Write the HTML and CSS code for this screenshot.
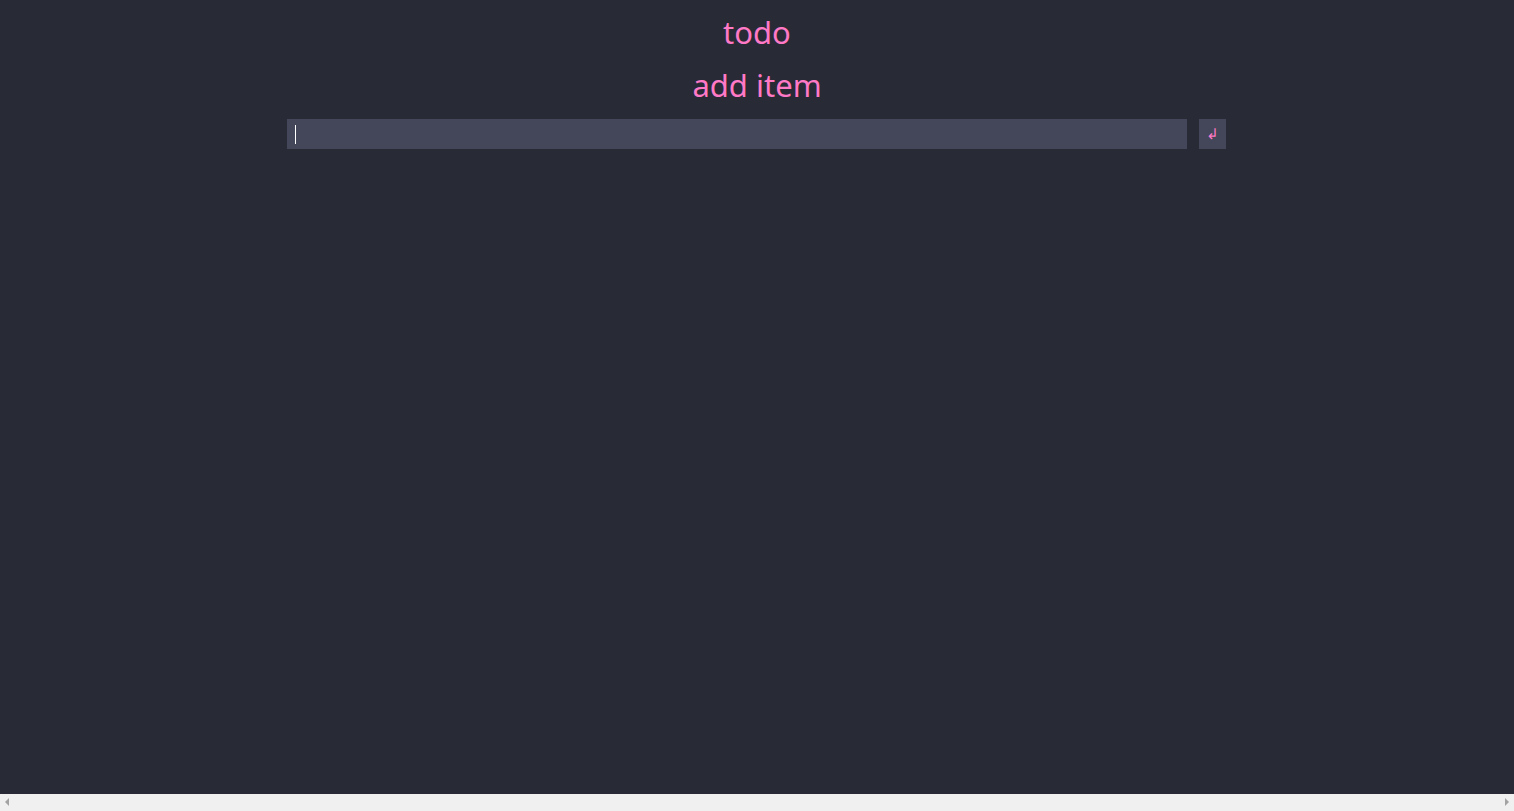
FILE: index.html
```html
<!DOCTYPE html>
<html lang="en">
<head>
<meta charset="utf-8">
<title>todo</title>
<link rel="stylesheet" href="styles.css">
</head>
<body>
<main class="app">
  <h1 class="title">todo</h1>
  <h2 class="subtitle">add item</h2>
  <form class="add-form">
    <div class="input-wrap">
      <input class="add-input" type="text" autofocus>
      <span class="caret"></span>
    </div>
    <button class="add-btn" type="button">↲</button>
  </form>
</main>
<div class="hscroll">
  <span class="arrow arrow-left"></span>
  <span class="arrow arrow-right"></span>
</div>
</body>
</html>
```

FILE: styles.css
```css
html, body {
  margin: 0;
  padding: 0;
  background: #282a36;
  height: 100%;
  overflow: hidden;
}
body {
  font-family: "Noto Sans", "Open Sans", sans-serif;
  color: #ff79c6;
}
.app {
  display: flex;
  flex-direction: column;
  align-items: center;
}
.title {
  margin: 11px 0 0;
  font-size: 31px;
  font-weight: 400;
  line-height: 42px;
}
.subtitle {
  margin: 10px 0 0;
  font-size: 31px;
  font-weight: 400;
  line-height: 44px;
}
.add-form {
  display: flex;
  gap: 12px;
  margin-top: 12px;
  margin-right: 1px;
}
.input-wrap {
  position: relative;
  display: flex;
}
.add-input {
  width: 900px;
  height: 30px;
  box-sizing: border-box;
  border: none;
  outline: none;
  background: #44475a;
  color: #f8f8f2;
  padding: 0 8px;
  font-family: inherit;
  font-size: 14px;
  caret-color: #ffffff;
}
.caret {
  position: absolute;
  left: 8px;
  top: 6px;
  width: 1px;
  height: 19px;
  background: #ffffff;
  pointer-events: none;
}
.add-btn {
  width: 27px;
  height: 30px;
  border: none;
  background: #44475a;
  color: #ff79c6;
  padding: 0;
  font-size: 15px;
  font-family: "DejaVu Sans", sans-serif;
  line-height: 30px;
}
.hscroll {
  position: fixed;
  left: 0;
  right: 0;
  bottom: 0;
  height: 17px;
  background: #f0f0f0;
}
.arrow {
  position: absolute;
  top: 4px;
  width: 0;
  height: 0;
  border-top: 4px solid transparent;
  border-bottom: 4px solid transparent;
}
.arrow-left {
  left: 5px;
  border-right: 4px solid #a3a3a3;
}
.arrow-right {
  right: 5px;
  border-left: 4px solid #a3a3a3;
}
```
